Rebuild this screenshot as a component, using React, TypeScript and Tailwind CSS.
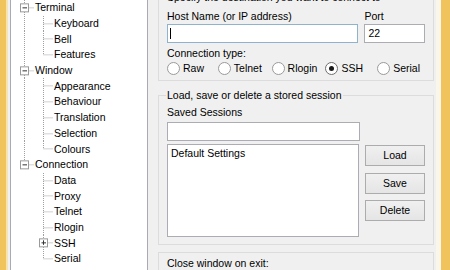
import React from 'react';

type RowKind = 'root' | 'child';

type TreeRow = {
  label: string;
  kind: RowKind;
  box?: 'minus' | 'plus';
  rootLine: 'through' | 'top' | 'none';
  childLine?: 'through' | 'top';
};

const rows: TreeRow[] = [
  { label: 'Terminal', kind: 'root', box: 'minus', rootLine: 'through' },
  { label: 'Keyboard', kind: 'child', rootLine: 'through', childLine: 'through' },
  { label: 'Bell', kind: 'child', rootLine: 'through', childLine: 'through' },
  { label: 'Features', kind: 'child', rootLine: 'through', childLine: 'top' },
  { label: 'Window', kind: 'root', box: 'minus', rootLine: 'through' },
  { label: 'Appearance', kind: 'child', rootLine: 'through', childLine: 'through' },
  { label: 'Behaviour', kind: 'child', rootLine: 'through', childLine: 'through' },
  { label: 'Translation', kind: 'child', rootLine: 'through', childLine: 'through' },
  { label: 'Selection', kind: 'child', rootLine: 'through', childLine: 'through' },
  { label: 'Colours', kind: 'child', rootLine: 'through', childLine: 'top' },
  { label: 'Connection', kind: 'root', box: 'minus', rootLine: 'top' },
  { label: 'Data', kind: 'child', rootLine: 'none', childLine: 'through' },
  { label: 'Proxy', kind: 'child', rootLine: 'none', childLine: 'through' },
  { label: 'Telnet', kind: 'child', rootLine: 'none', childLine: 'through' },
  { label: 'Rlogin', kind: 'child', rootLine: 'none', childLine: 'through' },
  { label: 'SSH', kind: 'child', box: 'plus', rootLine: 'none', childLine: 'through' },
  { label: 'Serial', kind: 'child', rootLine: 'none', childLine: 'top' },
];

const H = 15.7;
const MID = 7.85;
const DOT = '#a0a0a0';

const Box = ({ cx, sign }: { cx: number; sign: 'minus' | 'plus' }) => (
  <g>
    <rect x={cx - 4} y={MID - 4} width={8} height={8} fill="#ffffff" stroke="#9a9a9a" />
    <line x1={cx - 2} y1={MID} x2={cx + 2.5} y2={MID} stroke="#333" />
    {sign === 'plus' && <line x1={cx} y1={MID - 2.5} x2={cx} y2={MID + 2} stroke="#333" />}
  </g>
);

const Gutter = ({ row }: { row: TreeRow }) => {
  const rx = 13.5;
  const cx = 32.5;
  const w = row.kind === 'root' ? 24 : 43;
  return (
    <svg width={w} height={H} className="shrink-0">
      {row.rootLine === 'through' && (
        <line x1={rx} y1={0} x2={rx} y2={H} stroke={DOT} strokeDasharray="1 1" />
      )}
      {row.rootLine === 'top' && (
        <line x1={rx} y1={0} x2={rx} y2={MID} stroke={DOT} strokeDasharray="1 1" />
      )}
      {row.kind === 'root' && (
        <>
          <line x1={rx + 4} y1={MID} x2={23} y2={MID} stroke={DOT} strokeDasharray="1 1" />
          {row.box && <Box cx={rx} sign={row.box} />}
        </>
      )}
      {row.kind === 'child' && (
        <>
          <line
            x1={cx}
            y1={0}
            x2={cx}
            y2={row.childLine === 'top' ? MID : H}
            stroke={DOT}
            strokeDasharray="1 1"
          />
          <line x1={cx} y1={MID} x2={42} y2={MID} stroke={DOT} strokeDasharray="1 1" />
          {row.box && <Box cx={cx} sign={row.box} />}
        </>
      )}
    </svg>
  );
};

const Radio = ({ label, checked, width }: { label: string; checked?: boolean; width: string }) => (
  <div className={`flex items-center gap-[3px] ${width}`}>
    <div
      className={`w-[13px] h-[13px] rounded-full border bg-white flex items-center justify-center ${
        checked ? 'border-[#6f6f6f]' : 'border-[#9a9a9a]'
      }`}
    >
      {checked && <div className="w-[5px] h-[5px] rounded-full bg-[#1a1a1a]" />}
    </div>
    <span>{label}</span>
  </div>
);

const Button = ({ label, className }: { label: string; className?: string }) => (
  <div
    className={`w-[60px] h-[21px] border border-[#acacac] bg-gradient-to-b from-[#f0f0f0] to-[#e5e5e5] flex items-center justify-center ${className ?? ''}`}
  >
    {label}
  </div>
);

// group box with its caption sitting on the top edge
const Group = ({
  title,
  className,
  children,
}: {
  title?: string;
  className?: string;
  children: React.ReactNode;
}) => (
  <div className={`border border-[#dcdcdc] px-[8px] ${className ?? ''}`}>
    {title && <div className="-mt-[8px] ml-[-1px] px-[1px] w-fit bg-[#f0f0f0]">{title}</div>}
    {children}
  </div>
);

export default function App() {
  return (
    <div className="w-[450px] h-[270px] overflow-hidden flex bg-[#f0f0f0] text-[10.5px] leading-[15px] text-black font-['Liberation_Sans',Arial,sans-serif]">
      <div className="w-[6px] shrink-0 bg-[#f0c35c]" />
      <div className="w-[2px] shrink-0 bg-[#f7e3ae]" />

      {/* category tree */}
      <div className="w-[140px] shrink-0 pl-[2px]">
        <div className="w-[138px] h-[300px] -mt-[10px] border border-[#a8abb0] bg-white pt-[9px]">
          {rows.map((row) => (
            <div key={row.label} className="flex items-center h-[15.7px]">
              <Gutter row={row} />
              <span>{row.label}</span>
            </div>
          ))}
        </div>
      </div>

      {/* session panel */}
      <div className="w-[276px] shrink-0 ml-[10px]">
        <Group title="Specify the destination you want to connect to" className="-mt-[3px] pb-[4px]">
          <div className="flex gap-[6px] pt-[4px]">
            <div className="w-[193px]">
              <div>Host Name (or IP address)</div>
              <div className="h-[19px] border border-[#8fb3cc] bg-white flex items-center pl-[2px]">
                <div className="w-px h-[11px] bg-black" />
              </div>
            </div>
            <div className="w-[61px]">
              <div>Port</div>
              <div className="h-[19px] border border-[#abadb3] bg-white flex items-center pl-[3px]">22</div>
            </div>
          </div>
          <div className="mt-[3px]">Connection type:</div>
          <div className="flex items-center h-[15px]">
            <Radio label="Raw" width="w-[51px]" />
            <Radio label="Telnet" width="w-[54px]" />
            <Radio label="Rlogin" width="w-[54px]" />
            <Radio label="SSH" checked width="w-[52px]" />
            <Radio label="Serial" width="w-[48px]" />
          </div>
        </Group>

        <Group title="Load, save or delete a stored session" className="mt-[14px] pb-[7px]">
          <div className="mt-[2px]">Saved Sessions</div>
          <div className="mt-[2px] w-[193px] h-[19px] border border-[#abadb3] bg-white" />
          <div className="flex gap-[6px] mt-[3px]">
            <div className="w-[193px] h-[93px] border border-[#abadb3] bg-white pl-[3px] pt-[1px]">
              Default Settings
            </div>
            <div className="flex flex-col pt-px">
              <Button label="Load" />
              <Button label="Save" className="mt-[7px]" />
              <Button label="Delete" className="mt-[6px]" />
            </div>
          </div>
        </Group>

        <Group className="mt-[7px] pt-[3px] pb-[10px]">
          <div>Close window on exit:</div>
        </Group>
      </div>

      <div className="w-[2px] shrink-0" />
      <div className="w-[5px] shrink-0 bg-[#fbf6ea]" />
      <div className="flex-1 bg-[#f0c35c]" />
    </div>
  );
}
